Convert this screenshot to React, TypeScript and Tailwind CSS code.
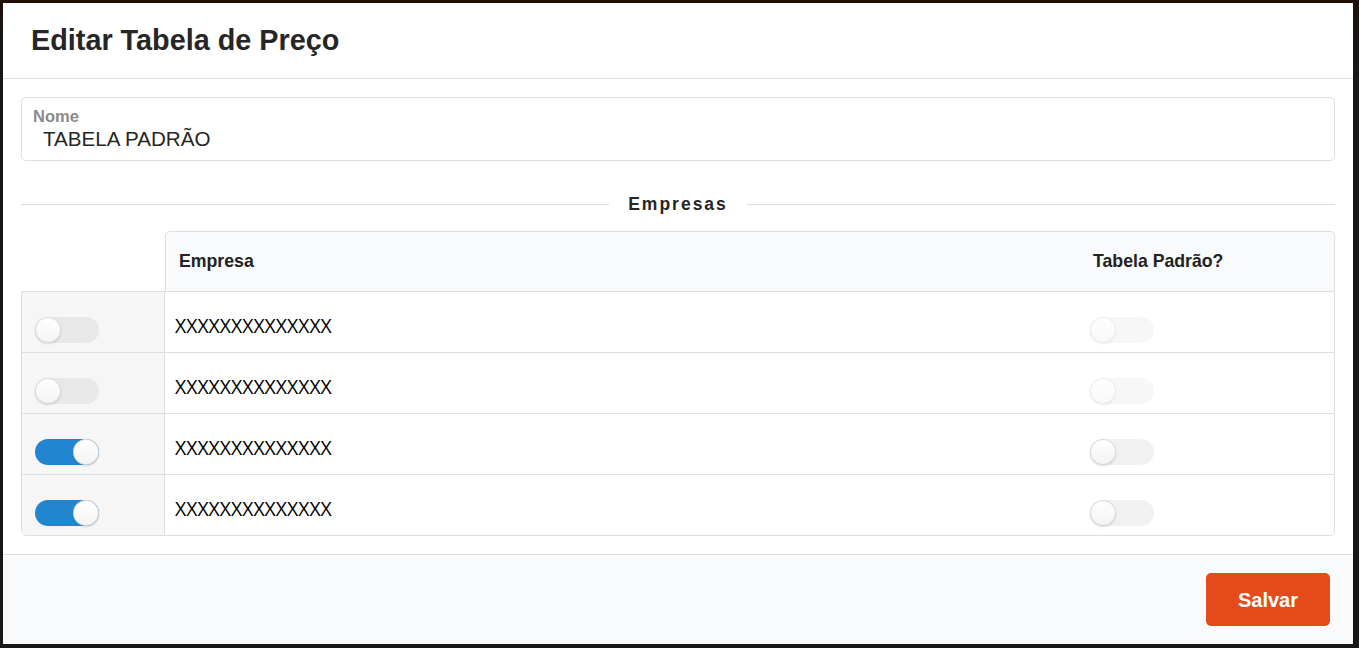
import React from "react";

interface ToggleProps {
  checked?: boolean;
  disabled?: boolean;
}

function Toggle({ checked = false, disabled = false }: ToggleProps) {
  return (
    <div
      className={`relative h-[26px] w-[64px] rounded-full ${
        checked ? "bg-[#2185d0]" : "bg-black/[0.055]"
      } ${disabled ? "opacity-50" : ""}`}
    >
      <div
        className={`absolute top-0 h-[26px] w-[26px] rounded-full bg-[linear-gradient(to_bottom,#ffffff,#f3f3f3)] shadow-[0_1px_2px_0_rgba(34,36,38,0.15),inset_0_0_0_1px_rgba(34,36,38,0.15)] ${
          checked ? "right-0" : "left-0"
        }`}
      />
    </div>
  );
}

const empresas = [
  { nome: "XXXXXXXXXXXXXX", ativa: false, padrao: false, travada: true },
  { nome: "XXXXXXXXXXXXXX", ativa: false, padrao: false, travada: true },
  { nome: "XXXXXXXXXXXXXX", ativa: true, padrao: false, travada: false },
  { nome: "XXXXXXXXXXXXXX", ativa: true, padrao: false, travada: false },
];

export default function App() {
  return (
    <div
      className="h-[648px] w-[1359px] overflow-hidden bg-[linear-gradient(to_bottom,#220f05_0px,#1c1410_22px,#171717_60px)] pl-[3px] pt-[3px]"
      style={{ fontFamily: '"Liberation Sans", Arial, sans-serif' }}
    >
      <div className="flex h-[641px] w-[1350px] flex-col bg-white">
        {/* header */}
        <div className="flex h-[76px] items-center border-b border-[#dedede] px-[28px]">
          <h1 className="text-[28.8px] font-bold text-[#262626]">Editar Tabela de Preço</h1>
        </div>

        {/* body */}
        <div className="px-[18px] pb-[18px] pt-[18px]">
          <div className="h-[64px] rounded-[5px] border border-[#dedede] pl-[11px] pt-[9px]">
            <div className="text-[16.5px] font-bold leading-[1.15] text-[#8a8a8a]">Nome</div>
            <div className="pl-[10px] text-[20.6px] leading-[1.26] text-[#262626]">TABELA PADRÃO</div>
          </div>

          <div className="mt-[33px] flex h-[20px] items-center gap-[19px]">
            <div className="h-px flex-1 bg-[#dedede]" />
            <span className="text-[17.5px] font-bold tracking-[2px] text-[#262626]">Empresas</span>
            <div className="h-px flex-1 bg-[#dedede]" />
          </div>

          <div className="mt-[17px]">
            <div className="flex">
              <div className="w-[144px]" />
              <div className="flex h-[60px] flex-1 rounded-t-[5px] border-x border-t border-[#dedede] bg-[#f9fafb] text-[17.7px] font-bold text-[#222]">
                <div className="flex flex-1 items-center pl-[13px]">Empresa</div>
                <div className="flex w-[255px] items-center pl-[14px]">Tabela Padrão?</div>
              </div>
            </div>
            <div className="rounded-b-[5px] border border-[#dedede]">
              {empresas.map((e, i) => (
                <div key={i} className={`flex h-[60px] ${i > 0 ? "box-content border-t border-[#dedede]" : ""}`}>
                  <div className="w-[143px] border-r border-[#dedede] bg-[#f6f6f6] pl-[13px] pt-[25px]">
                    <Toggle checked={e.ativa} />
                  </div>
                  <div
                    className="flex flex-1 items-center pl-[10px] pt-[7px] text-[19.4px] text-black"
                    style={{ fontFamily: '"Open Sans", sans-serif' }}
                  >
                    {e.nome}
                  </div>
                  <div className="w-[255px] pl-[11px] pt-[25px]">
                    <Toggle checked={e.padrao} disabled={e.travada} />
                  </div>
                </div>
              ))}
            </div>
          </div>
        </div>

        {/* footer */}
        <div className="flex flex-1 justify-end border-t border-[#dedede] bg-[#f9fafb] pr-[23px] pt-[18px]">
          <button className="h-[53px] w-[124px] rounded-[5px] bg-[#e54b1a] text-[20px] font-bold text-white">
            Salvar
          </button>
        </div>
      </div>
    </div>
  );
}
